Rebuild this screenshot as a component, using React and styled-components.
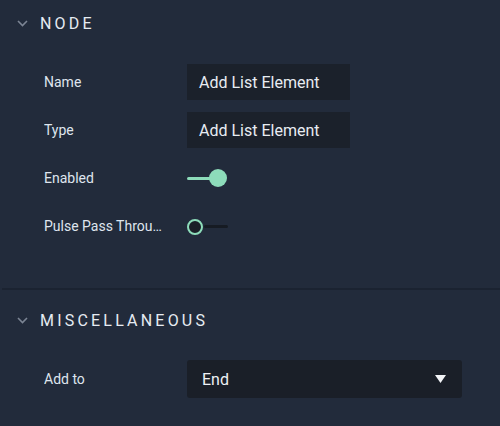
import React from "react";
import styled, { createGlobalStyle } from "styled-components";

const Global = createGlobalStyle`
  html, body {
    margin: 0;
    padding: 0;
    background: #222b3b;
  }
  body {
    font-family: Roboto, "Liberation Sans", sans-serif;
    color: #e2e7ef;
  }
`;

const Panel = styled.div`
  width: 500px;
  height: 426px;
  background: #222b3b;
  overflow: hidden;
`;

const Section = styled.section`
  display: flex;
  flex-direction: column;
  padding-top: ${(p) => p.$top || 0}px;
  padding-bottom: ${(p) => p.$bottom || 0}px;
`;

const Divider = styled.div`
  height: 2px;
  margin-left: 2px;
  background: #1b2331;
`;

const Header = styled.div`
  display: flex;
  align-items: center;
  height: 46px;
  padding-left: 17px;
  gap: 12px;
`;

const Title = styled.span`
  font-size: 16px;
  font-weight: 400;
  letter-spacing: 3.2px;
  color: #e6ebf2;
`;

const Rows = styled.div`
  display: flex;
  flex-direction: column;
  padding-top: 12px;
`;

const Row = styled.div`
  display: flex;
  align-items: center;
  height: 48px;
  padding-left: 44px;
`;

const Label = styled.span`
  width: 122px;
  margin-right: 21px;
  font-size: 14px;
  color: #dfe5ee;
  white-space: nowrap;
  overflow: hidden;
  text-overflow: ellipsis;
`;

const Input = styled.div`
  display: flex;
  align-items: center;
  width: 163px;
  height: 36px;
  box-sizing: border-box;
  padding-left: 12px;
  background: #1b212b;
  font-size: 16px;
  color: #e8ecf2;
`;

const Toggle = styled.div`
  position: relative;
  width: 42px;
  height: 18px;
  display: flex;
  align-items: center;
`;

const Track = styled.div`
  height: 3px;
  border-radius: 2px;
  margin-left: ${(p) => (p.$on ? 0 : 17)}px;
  width: 24px;
  background: ${(p) => (p.$on ? "#8ddcba" : "#161b23")};
`;

const Thumb = styled.div`
  position: absolute;
  top: ${(p) => (p.$on ? 0 : 1.5)}px;
  left: ${(p) => (p.$on ? 22 : 0)}px;
  box-sizing: border-box;
  width: ${(p) => (p.$on ? 18 : 16)}px;
  height: ${(p) => (p.$on ? 18 : 16)}px;
  border-radius: 50%;
  background: ${(p) => (p.$on ? "#8ddcba" : "#1a1f27")};
  border: ${(p) => (p.$on ? "none" : "2.5px solid #8ddcba")};
`;

const Select = styled.div`
  display: flex;
  align-items: center;
  justify-content: space-between;
  width: 275px;
  height: 38px;
  box-sizing: border-box;
  padding: 0 16px 0 15px;
  border-radius: 3px;
  background: #1a1f28;
  font-size: 16px;
  color: #eef1f5;
`;

const Chevron = () => (
  <svg width="11" height="7" viewBox="0 0 11 7">
    <path d="M1 1l4.5 4.5L10 1" fill="none" stroke="#7c8594" strokeWidth="1.6" />
  </svg>
);

const Caret = () => (
  <svg width="11" height="8" viewBox="0 0 11 8">
    <path d="M0 0h11L5.5 8z" fill="#f2f4f7" />
  </svg>
);

function Switch({ on }) {
  return (
    <Toggle>
      <Track $on={on} />
      <Thumb $on={on} />
    </Toggle>
  );
}

export default function App() {
  return (
    <Panel>
      <Global />
      <Section $bottom={38}>
        <Header>
          <Chevron />
          <Title>NODE</Title>
        </Header>
        <Rows>
          <Row>
            <Label>Name</Label>
            <Input>Add List Element</Input>
          </Row>
          <Row>
            <Label>Type</Label>
            <Input>Add List Element</Input>
          </Row>
          <Row>
            <Label>Enabled</Label>
            <Switch on />
          </Row>
          <Row>
            <Label>Pulse Pass Through</Label>
            <Switch />
          </Row>
        </Rows>
      </Section>
      <Divider />
      <Section $top={7}>
        <Header>
          <Chevron />
          <Title>MISCELLANEOUS</Title>
        </Header>
        <Rows>
          <Row>
            <Label>Add to</Label>
            <Select>
              <span>End</span>
              <Caret />
            </Select>
          </Row>
        </Rows>
      </Section>
    </Panel>
  );
}
